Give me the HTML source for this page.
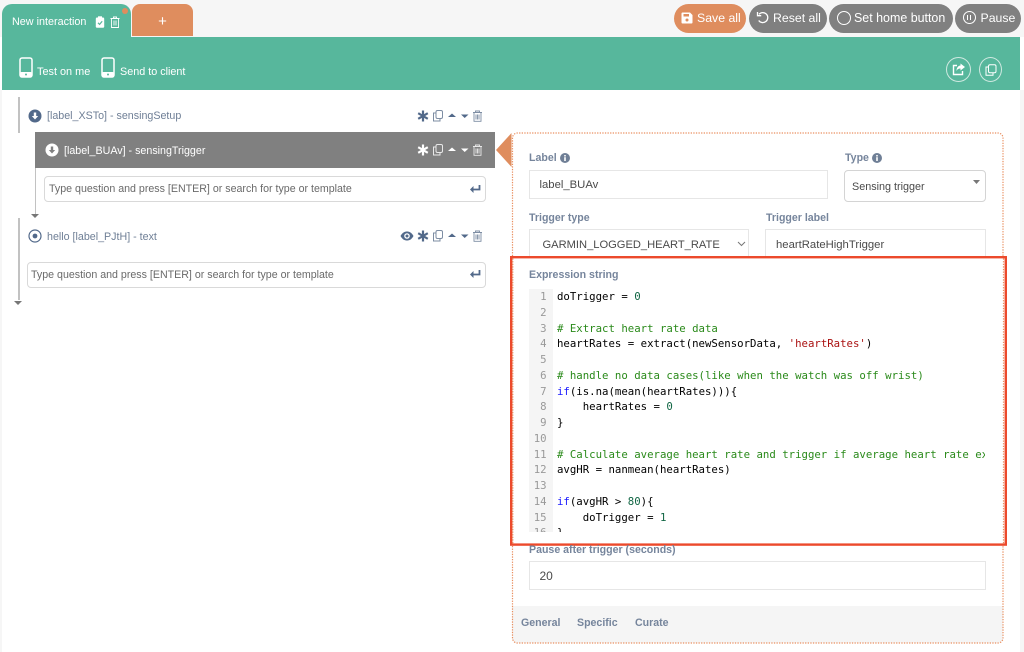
<!DOCTYPE html>
<html><head><meta charset="utf-8">
<style>
html,body{margin:0;padding:0;width:1024px;height:652px;overflow:hidden;background:#fff;font-family:"Liberation Sans",sans-serif;}
.a{position:absolute;white-space:nowrap;}
.lbl{position:absolute;white-space:nowrap;font-size:10.6px;font-weight:bold;color:#76859c;line-height:14px;}
.inp{position:absolute;box-sizing:border-box;border:1px solid #e6e6e6;background:#fff;font-size:11.3px;color:#4a4a4a;white-space:nowrap;}
.btn{position:absolute;top:4px;height:29px;border-radius:15px;background:#808080;color:#fff;font-size:12.3px;line-height:29px;white-space:nowrap;box-sizing:border-box;}
.t{position:absolute;white-space:nowrap;font-size:10.7px;color:#6f7f96;line-height:14px;}
.q{position:absolute;box-sizing:border-box;border:1px solid #d9d9d9;border-radius:4px;background:#fff;height:26px;font-size:10.65px;line-height:24px;color:#6a6a6a;white-space:nowrap;}
svg{position:absolute;overflow:visible;}
.code{position:absolute;left:557px;top:289px;font-family:"DejaVu Sans Mono","Liberation Mono",monospace;font-size:10.7px;line-height:15.75px;color:#000;white-space:pre;width:428px;height:243px;overflow:hidden;}
.nums{position:absolute;left:529px;top:289px;width:24px;height:243px;overflow:hidden;background:#f5f5f5;font-family:"DejaVu Sans Mono","Liberation Mono",monospace;font-size:10.7px;line-height:15.75px;color:#999;text-align:right;white-space:pre;}
.c{color:#2a8a1a}.k{color:#1a1aff}.n{color:#116644}.s{color:#aa1111}
</style></head>
<body>
<!-- top bar -->
<div class="a" style="left:0;top:0;width:1024px;height:37px;background:#f6f6f6"></div>
<div class="a" style="left:0;top:90px;width:2px;height:562px;background:#f6f6f6"></div>
<div class="a" style="left:1020px;top:90px;width:4px;height:562px;background:#f6f6f6"></div>
<!-- tabs -->
<div class="a" style="left:2px;top:4px;width:129px;height:40px;background:#57b79c;border-radius:10px 10px 0 0"></div>
<div class="a" style="left:132px;top:4px;width:61px;height:32px;background:#df8d5e;border-radius:8px 8px 0 0"></div>
<div class="a" style="left:132px;top:4px;width:61px;height:32px;color:#fff;font-size:15px;line-height:36px;text-align:center">+</div>
<div class="a" style="left:122px;top:8px;width:6px;height:6px;border-radius:50%;background:#df8d5e"></div>
<div class="a" style="left:12px;top:15px;font-size:10.8px;line-height:14px;color:#fff">New interaction</div>
<svg style="left:95px;top:16px" width="10" height="12" viewBox="0 0 10 12"><rect x=".8" y="1.500" width="8.400" height="10.300" rx="1.200" fill="#fff"/><rect x="3" y=".3" width="4" height="2.200" fill="#fff"/><path d="M3 6.800l1.600 1.600L7.200 5.300" stroke="#57b79c" stroke-width="1.200" fill="none"/></svg>
<svg style="left:110px;top:16px" width="10" height="12" viewBox="0 0 10 12"><path d="M.5 2.500h9M3.500 2.500V1h3v1.500M1.500 2.500V11.500h7V2.500M4 4.500v5M6 4.500v5" stroke="#fff" stroke-width=".9" fill="none"/></svg>
<!-- green bar -->
<div class="a" style="left:2px;top:37px;width:1018px;height:53px;background:#57b79c"></div>
<svg style="left:19px;top:57px" width="14" height="21" viewBox="0 0 14 21"><rect x="1" y="1" width="12" height="19" rx="2" fill="none" stroke="#fff" stroke-width="1.500"/><rect x="1" y="15" width="12" height="5" rx="1.500" fill="#fff"/><circle cx="7" cy="17.500" r="1" fill="#57b79c"/></svg>
<div class="a" style="left:37px;top:65px;font-size:10.9px;line-height:14px;color:#fff">Test on me</div>
<svg style="left:101px;top:57px" width="14" height="21" viewBox="0 0 14 21"><rect x="1" y="1" width="12" height="19" rx="2" fill="none" stroke="#fff" stroke-width="1.500"/><rect x="1" y="15" width="12" height="5" rx="1.500" fill="#fff"/><circle cx="7" cy="17.500" r="1" fill="#57b79c"/></svg>
<div class="a" style="left:120px;top:65px;font-size:10.8px;line-height:14px;color:#fff">Send to client</div>
<!-- right circles -->
<div class="a" style="left:946px;top:57px;width:25px;height:25px;box-sizing:border-box;border:1px solid #cfe9e1;border-radius:50%"></div>
<svg style="left:952px;top:63px" width="14" height="13" viewBox="0 0 14 13"><path d="M5 2.500H1.500V11.500H10.500V8" fill="none" stroke="#fff" stroke-width="1.400"/><path d="M8.500 0.500L13 4L8.500 7.500V5.500C6.500 5.500 5.200 6.300 4.500 8C4.500 5 6 2.700 8.500 2.500Z" fill="#fff"/></svg>
<div class="a" style="left:979px;top:57px;width:23px;height:25px;box-sizing:border-box;border:1px solid #cfe9e1;border-radius:50%"></div>
<svg style="left:985px;top:64px" width="12" height="12" viewBox="0 0 12 12"><rect x="3.500" y=".7" width="7.500" height="8" rx="1.500" fill="none" stroke="#fff"/><path d="M3.500 3H1v8.300h7V8.700" fill="none" stroke="#fff"/></svg>
<!-- top buttons -->
<div class="btn" style="left:674px;width:72px;background:#df8d5e;padding-left:23px">Save all</div>
<svg style="left:681px;top:12px" width="12" height="12" viewBox="0 0 12 12"><path d="M1.500 0.500H9L11.500 3V10.500A1 1 0 0 1 10.500 11.500H1.500A1 1 0 0 1 .5 10.500V1.500A1 1 0 0 1 1.500 .5Z" fill="#fff"/><rect x="2.500" y="2" width="5.500" height="2.500" fill="#df8d5e"/><circle cx="6" cy="8" r="1.500" fill="#df8d5e"/></svg>
<div class="btn" style="left:749px;width:78px;padding-left:24px">Reset all</div>
<svg style="left:756px;top:11px" width="13" height="13" viewBox="0 0 13 13"><path d="M3 3.300A5 5 0 1 1 2.700 9.500" fill="none" stroke="#fff" stroke-width="1.300"/><path d="M1.500 1V4.700H5.200" fill="none" stroke="#fff" stroke-width="1.300"/></svg>
<div class="btn" style="left:829px;width:124px;padding-left:25px;font-size:12.450px">Set home button</div>
<div class="a" style="left:837px;top:11px;width:14px;height:14px;box-sizing:border-box;border:1.300px solid #fff;border-radius:50%"></div>
<div class="btn" style="left:955px;width:66px;padding-left:25.500px">Pause</div>
<div class="a" style="left:963px;top:11px;width:13px;height:13px;box-sizing:border-box;border:1.200px solid #fff;border-radius:50%"></div>
<div class="a" style="left:967px;top:15px;width:1px;height:5px;background:#fff"></div>
<div class="a" style="left:970px;top:15px;width:1px;height:5px;background:#fff"></div>

<!-- left tree -->
<div class="a" style="left:18px;top:97px;width:2px;height:36px;background:#c2c2c2"></div>
<div class="a" style="left:18px;top:218px;width:2px;height:82px;background:#c2c2c2"></div>
<div class="a" style="left:35px;top:132px;width:1px;height:82px;background:#c2c2c2"></div>
<svg style="left:31px;top:214px" width="8" height="5"><path d="M0 0h8L4 4z" fill="#777"/></svg>
<svg style="left:14px;top:301px" width="8" height="5"><path d="M0 0h8L4 4z" fill="#777"/></svg>

<svg style="left:28px;top:109px" width="14" height="14" viewBox="0 0 14 14"><circle cx="7" cy="7" r="6.500" fill="#52698a"/><path d="M5.800 3.500h2.400v3.500h2L7 10.500 3.800 7h2z" fill="#fff"/></svg>
<div class="t" style="left:47px;top:109px">[label_XSTo] - sensingSetup</div>

<div class="a" style="left:35px;top:132px;width:460px;height:36px;background:#808080"></div>
<svg style="left:45px;top:143px" width="14" height="14" viewBox="0 0 14 14"><circle cx="7" cy="7" r="6.500" fill="#fff"/><path d="M5.800 3.500h2.400v3.500h2L7 10.500 3.800 7h2z" fill="#808080"/></svg>
<div class="t" style="left:64px;top:144px;color:#fff">[label_BUAv] - sensingTrigger</div>

<div class="q" style="left:44px;top:176px;width:442px;padding-left:4px">Type question and press [ENTER] or search for type or template</div>
<svg style="left:469px;top:184px" width="12" height="10" viewBox="0 0 12 10"><path d="M10.500 1V5.500H3" fill="none" stroke="#52698a" stroke-width="1.800"/><path d="M4.500 2L1 5.500 4.500 9z" fill="#52698a"/></svg>

<svg style="left:28px;top:229px" width="14" height="14" viewBox="0 0 14 14"><circle cx="7" cy="7" r="6" fill="none" stroke="#52698a" stroke-width="1.200"/><circle cx="7" cy="7" r="2.400" fill="#52698a"/></svg>
<div class="t" style="left:47px;top:230px">hello [label_PJtH] - text</div>

<div class="q" style="left:27px;top:262px;width:459px;padding-left:3px">Type question and press [ENTER] or search for type or template</div>
<svg style="left:469px;top:269px" width="12" height="10" viewBox="0 0 12 10"><path d="M10.500 1V5.500H3" fill="none" stroke="#52698a" stroke-width="1.800"/><path d="M4.500 2L1 5.500 4.500 9z" fill="#52698a"/></svg>

<!-- row icons rows -->
<svg style="left:417px;top:110px" width="70" height="12" viewBox="0 0 70 12"><path d="M6 .5v11M1.200 3.200l9.600 5.600M10.800 3.200L1.200 8.800" stroke="#52698a" stroke-width="2.200"/><rect x="19" y=".5" width="6.500" height="8" rx="1.500" fill="none" stroke="#7d8da3"/><path d="M19 3H16.500V11H23V8.500" fill="none" stroke="#7d8da3"/><path d="M31 7h8L35 3.500z" fill="#52698a"/><path d="M44 4.500h7.500L47.700 8z" fill="#52698a"/><path d="M56 2.500h9M58.500 2.500V1h4v1.500M57 2.500V11.300h7V2.500M59 4.500v5M60.500 4.500v5M62 4.500v5" stroke="#7d8da3" fill="none" stroke-width=".9"/></svg>
<svg style="left:417px;top:144px" width="70" height="12" viewBox="0 0 70 12"><path d="M6 .5v11M1.200 3.200l9.600 5.600M10.800 3.200L1.200 8.800" stroke="#fff" stroke-width="2.200"/><rect x="19" y=".5" width="6.500" height="8" rx="1.500" fill="none" stroke="#e8e8e8"/><path d="M19 3H16.500V11H23V8.500" fill="none" stroke="#e8e8e8"/><path d="M31 7h8L35 3.500z" fill="#fff"/><path d="M44 4.500h7.500L47.700 8z" fill="#fff"/><path d="M56 2.500h9M58.500 2.500V1h4v1.500M57 2.500V11.300h7V2.500M59 4.500v5M60.500 4.500v5M62 4.500v5" stroke="#e8e8e8" fill="none" stroke-width=".9"/></svg>
<svg style="left:400px;top:230px" width="14" height="12" viewBox="0 0 14 12"><path d="M.5 6C2.500 2.500 4.500 1.500 7 1.500S11.500 2.500 13.500 6C11.500 9.500 9.500 10.500 7 10.500S2.500 9.500 .5 6Z" fill="#52698a"/><circle cx="7" cy="6" r="2.800" fill="#fff"/><circle cx="7" cy="6" r="1.500" fill="#52698a"/></svg>
<svg style="left:417px;top:230px" width="70" height="12" viewBox="0 0 70 12"><path d="M6 .5v11M1.200 3.200l9.600 5.600M10.800 3.200L1.200 8.800" stroke="#52698a" stroke-width="2.200"/><rect x="19" y=".5" width="6.500" height="8" rx="1.500" fill="none" stroke="#7d8da3"/><path d="M19 3H16.500V11H23V8.500" fill="none" stroke="#7d8da3"/><path d="M31 7h8L35 3.500z" fill="#52698a"/><path d="M44 4.500h7.500L47.700 8z" fill="#52698a"/><path d="M56 2.500h9M58.500 2.500V1h4v1.500M57 2.500V11.300h7V2.500M59 4.500v5M60.500 4.500v5M62 4.500v5" stroke="#7d8da3" fill="none" stroke-width=".9"/></svg>

<!-- right panel -->
<svg style="left:496px;top:133px" width="16" height="34"><path d="M15.500 0V34L0 17z" fill="#df8d5e"/></svg>
<div class="a" style="left:512px;top:606px;width:491px;height:37px;background:#f5f5f5;border-radius:0 0 5px 5px"></div>

<div class="lbl" style="left:529px;top:151px">Label</div>
<svg style="left:560px;top:153px" width="10" height="10" viewBox="0 0 10 10"><circle cx="5" cy="5" r="5" fill="#6f7f96"/><rect x="4.200" y="4.200" width="1.600" height="3.800" fill="#fff"/><rect x="4.200" y="2" width="1.600" height="1.500" fill="#fff"/></svg>
<div class="inp" style="left:529px;top:170px;width:299px;height:29px;line-height:29px;padding-left:9.500px">label_BUAv</div>
<div class="lbl" style="left:845px;top:151px">Type</div>
<svg style="left:872px;top:153px" width="10" height="10" viewBox="0 0 10 10"><circle cx="5" cy="5" r="5" fill="#6f7f96"/><rect x="4.200" y="4.200" width="1.600" height="3.800" fill="#fff"/><rect x="4.200" y="2" width="1.600" height="1.500" fill="#fff"/></svg>
<div class="inp" style="left:844px;top:170px;width:142px;height:32px;line-height:33px;padding-left:7px;border:1px solid #d4d4d4;border-radius:4px;font-size:10.8px">Sensing trigger</div>
<svg style="left:973px;top:180px" width="7" height="5"><path d="M0 0h7L3.500 4z" fill="#777"/></svg>

<div class="lbl" style="left:529px;top:211px">Trigger type</div>
<div class="inp" style="left:529px;top:229px;width:220px;height:30px;line-height:30px;padding-left:12.500px;font-size:11.15px">GARMIN_LOGGED_HEART_RATE</div>
<svg style="left:737px;top:241px" width="9" height="6"><path d="M1 1l3.500 3.500L8 1" fill="none" stroke="#777"/></svg>
<div class="lbl" style="left:766px;top:211px">Trigger label</div>
<div class="inp" style="left:765px;top:229px;width:221px;height:30px;line-height:30px;padding-left:10px;font-size:11.3px">heartRateHighTrigger</div>

<!-- highlighted block -->
<div class="a" style="left:510px;top:256px;width:497px;height:290px;background:#fff"></div>
<svg style="left:0;top:0" width="1024" height="652"><rect x="511.200" y="257.200" width="494.600" height="287.400" fill="none" stroke="#ec4a2c" stroke-width="2.400"/></svg>
<svg style="left:0;top:0" width="1024" height="652"><path d="M512.500 256V138a5 5 0 0 1 5-5H998a5 5 0 0 1 5 5V256M512.500 546V638a5 5 0 0 0 5 5H998a5 5 0 0 0 5-5V546" fill="none" stroke="#e98f60" stroke-width="1.200" stroke-dasharray="1.300 1.300"/><path d="M512.800 258.500V543.500M1003.500 258.500V543.500" fill="none" stroke="#e98f60" stroke-width="1.200" stroke-dasharray="1.300 1.300"/></svg>
<div class="lbl" style="left:529px;top:268px">Expression string</div>
<div class="nums"> 1 
 2 
 3 
 4 
 5 
 6 
 7 
 8 
 9 
10 
11 
12 
13 
14 
15 
16 </div>
<div class="code">doTrigger = <span class="n">0</span>

<span class="c"># Extract heart rate data</span>
heartRates = extract(newSensorData, <span class="s">'heartRates'</span>)

<span class="c"># handle no data cases(like when the watch was off wrist)</span>
<span class="k">if</span>(is.na(mean(heartRates))){
    heartRates = <span class="n">0</span>
}

<span class="c"># Calculate average heart rate and trigger if average heart rate exceeds</span>
avgHR = nanmean(heartRates)

<span class="k">if</span>(avgHR &gt; <span class="n">80</span>){
    doTrigger = <span class="n">1</span>
}</div>

<div class="lbl" style="left:529px;top:543px">Pause after trigger (seconds)</div>
<div class="inp" style="left:529px;top:561px;width:457px;height:29px;line-height:29px;padding-left:9.500px;font-size:12px">20</div>
<div class="lbl" style="left:521px;top:616px">General</div>
<div class="lbl" style="left:577px;top:616px">Specific</div>
<div class="lbl" style="left:635px;top:616px">Curate</div>
</body></html>
